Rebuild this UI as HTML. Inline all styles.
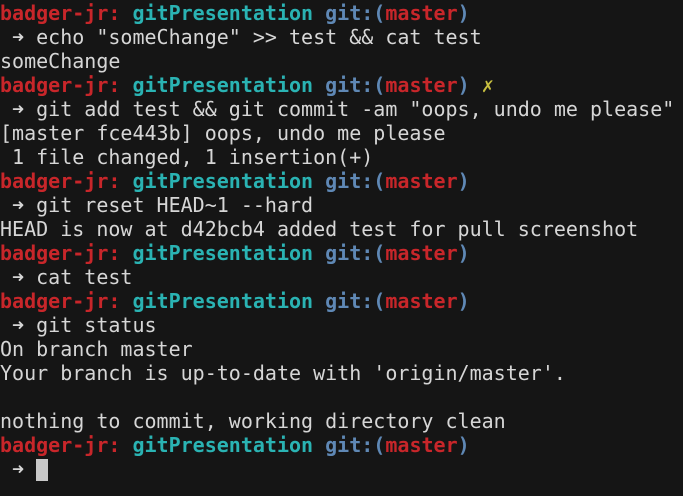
<!DOCTYPE html><html><head><style>
html,body{margin:0;background:#151515;width:683px;height:496px;overflow:hidden}
pre{margin:0;padding:1px 0 0 0;font-family:"DejaVu Sans Mono","Liberation Mono",monospace;font-size:20px;line-height:24px;color:#d6d6d6;white-space:pre}
.r{color:#c8262a;font-weight:bold}.c{color:#2ab3b3;font-weight:bold}.b{color:#5f88b5;font-weight:bold}.y{color:#c8c040}
.cur{display:inline-block;width:12px;height:22px;background:#c8c8c8;vertical-align:-5px}
</style></head><body><pre><span class="r">badger-jr:</span> <span class="c">gitPresentation</span> <span class="b">git:(</span><span class="r">master</span><span class="b">)</span>
 ➜ echo "someChange" &gt;&gt; test &amp;&amp; cat test
someChange
<span class="r">badger-jr:</span> <span class="c">gitPresentation</span> <span class="b">git:(</span><span class="r">master</span><span class="b">)</span> <span class="y">✗</span>
 ➜ git add test &amp;&amp; git commit -am "oops, undo me please"
[master fce443b] oops, undo me please
 1 file changed, 1 insertion(+)
<span class="r">badger-jr:</span> <span class="c">gitPresentation</span> <span class="b">git:(</span><span class="r">master</span><span class="b">)</span>
 ➜ git reset HEAD~1 --hard
HEAD is now at d42bcb4 added test for pull screenshot
<span class="r">badger-jr:</span> <span class="c">gitPresentation</span> <span class="b">git:(</span><span class="r">master</span><span class="b">)</span>
 ➜ cat test
<span class="r">badger-jr:</span> <span class="c">gitPresentation</span> <span class="b">git:(</span><span class="r">master</span><span class="b">)</span>
 ➜ git status
On branch master
Your branch is up-to-date with 'origin/master'.

nothing to commit, working directory clean
<span class="r">badger-jr:</span> <span class="c">gitPresentation</span> <span class="b">git:(</span><span class="r">master</span><span class="b">)</span>
 ➜ <span class="cur"></span></pre></body></html>
